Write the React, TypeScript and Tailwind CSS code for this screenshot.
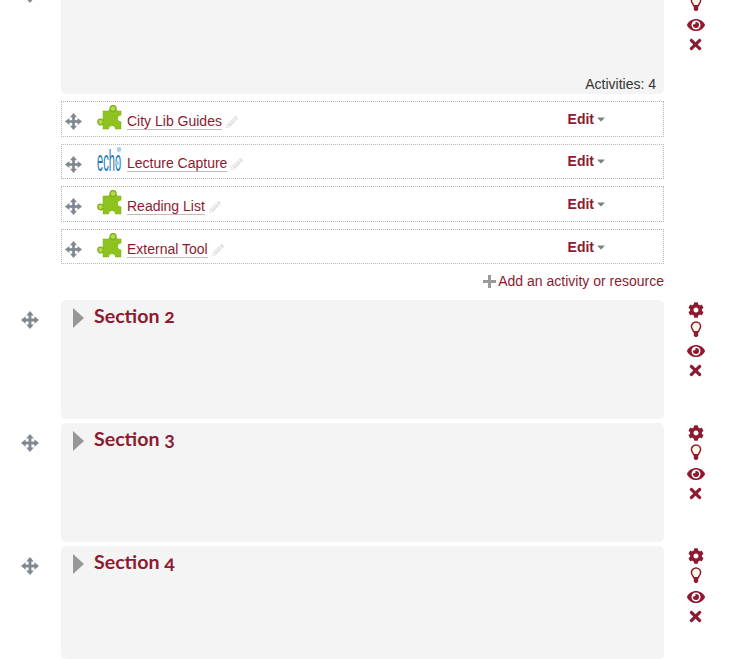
import React from "react";
import { FaCog, FaEye, FaTimes, FaPencilAlt, FaCaretDown } from "react-icons/fa";

const Move = ({ size = 18 }: { size?: number }) => (
  <svg width={size} height={size} viewBox="0 0 18 18" className="shrink-0">
    <g fill="#7f8790">
      <rect x="7.6" y="3" width="2.8" height="12" />
      <rect x="3" y="7.6" width="12" height="2.8" />
      <path d="M9 0 L12.8 4.6 L5.2 4.6 Z" />
      <path d="M9 18 L12.8 13.4 L5.2 13.4 Z" />
      <path d="M0 9 L4.6 5.2 L4.6 12.8 Z" />
      <path d="M18 9 L13.4 5.2 L13.4 12.8 Z" />
    </g>
  </svg>
);

const Bulb = () => (
  <svg width="14" height="17" viewBox="0 0 14 17" className="-mt-[1px]">
    <path d="M7 1a4.6 4.6 0 0 0-4.6 4.6c0 2 1.6 3.1 2.4 5.2h4.4c.8-2.1 2.4-3.2 2.4-5.2A4.6 4.6 0 0 0 7 1Z" fill="#fff9e8" stroke="#8e1a30" strokeWidth="1.5" />
    <path d="M4.8 10.5h4.4v3.7L8 16H6L4.8 14.2Z" fill="#8e1a30" />
  </svg>
);

const Puzzle = () => (
  <svg width="25" height="25" viewBox="0 0 25 25" className="shrink-0">
    <path d="M6 6h6v-1h8v1h4v18H6Z" fill="#8ec31f" stroke="#7aaa14" strokeWidth="0.5" />
    <circle cx="16" cy="3.6" r="3" fill="#b3dc4a" stroke="#7fae18" strokeWidth="1.3" />
    <circle cx="3.6" cy="17" r="2.8" fill="#b3dc4a" stroke="#7fae18" strokeWidth="1.3" />
    <rect x="6" y="16" width="3" height="2" fill="#8ec31f" />
    <circle cx="24" cy="13.5" r="3" fill="#fff" />
    <circle cx="15" cy="24" r="3" fill="#fff" />
  </svg>
);

const Echo = () => (
  <svg width="25" height="27" viewBox="0 0 25 27" className="shrink-0 overflow-visible">
    <text transform="translate(0 25) scale(0.37 1)" fontFamily="'Liberation Sans', sans-serif" fontSize="30" fill="#1f78bd">echo</text>
    <circle cx="22" cy="3.5" r="2.4" fill="#a8cfe6" />
    <circle cx="20.5" cy="17" r="2" fill="#9fd8d8" />
  </svg>
);

const Row = ({ name, icon, h, textMt, iconMt, penMt, editMt }: { name: string; icon: React.ReactNode; h: string; textMt: string; iconMt: string; penMt: string; editMt: string }) => (
  <li className={`flex items-start border border-dotted border-[#b5b5b5] bg-white ${h}`}>
    <div className="ml-[3px] mt-[11px] w-[32px] shrink-0"><Move size={17} /></div>
    <div className="flex items-start">
      <div className={`w-[30px] shrink-0 ${iconMt}`}>{icon}</div>
      <a className={`border-b border-[#bdbdbd] text-[14px] leading-[16px] text-[#8e1a30] ${textMt}`}>{name}</a>
      <FaPencilAlt className={`ml-[4px] text-[#e4e4e4] ${penMt}`} size={12} />
    </div>
    <div className={`ml-auto mr-[56px] flex items-center text-[14px] font-bold leading-[20px] text-[#8e1a30] ${editMt}`}>
      Edit<FaCaretDown className="-mt-[1px] ml-[1px] text-[#808080]" size={12} />
    </div>
  </li>
);

const Controls = () => (
  <div className="flex w-[63px] shrink-0 flex-col items-center text-[#8e1a30]">
    <div className="flex h-[20px] items-center"><FaCog size={16} /></div>
    <div className="flex h-[20px] items-center"><Bulb /></div>
    <div className="flex h-[21px] items-center"><FaEye size={18} /></div>
    <div className="flex h-[19px] items-center"><FaTimes size={17} /></div>
  </div>
);

const Section = ({ title, h, mb }: { title: string; h: string; mb: string }) => (
  <section className={`flex ${mb}`}>
    <div className="flex w-[61px] shrink-0 justify-start pl-[21px] pt-[11px]"><Move /></div>
    <div className={`w-[603px] shrink-0 rounded-[5px] bg-[#f4f4f4] ${h}`}>
      <div className="flex items-start pl-[12px] pt-[5px]">
        <svg width="11" height="20" viewBox="0 0 11 20" className="mt-[3px] shrink-0"><path d="M0 0 L11 10 L0 20 Z" fill="#979797" /></svg>
        <h3 className="ml-[10px] text-[19.6px] font-bold leading-[22px] text-[#8e1a30] [font-family:Lato,sans-serif] [font-variant-numeric:oldstyle-nums]">{title}</h3>
      </div>
    </div>
    <Controls />
  </section>
);

export default function App() {
  return (
    <div className="h-[659px] w-[732px] overflow-hidden bg-white [font-family:'Liberation_Sans',Arial,sans-serif] text-[14px]">
      <section className="-mt-[26px] flex">
        <div className="flex w-[61px] shrink-0 pl-[21px] pt-[11px]"><Move /></div>
        <div className="w-[603px] shrink-0">
          <div className="relative h-[120px] rounded-[5px] bg-[#f4f4f4]">
            <span className="absolute bottom-0 right-[8px] leading-[20px] text-[#333]">Activities: 4</span>
          </div>
          <ul className="mt-[7px] flex flex-col">
            <Row name="City Lib Guides" icon={<Puzzle />} h="h-[36px] mb-[7px]" textMt="mt-[11px]" iconMt="mt-[3px]" penMt="mt-[14px]" editMt="mt-[7px]" />
            <Row name="Lecture Capture" icon={<Echo />} h="h-[35px] mb-[7px]" textMt="mt-[10px]" iconMt="mt-[1px]" penMt="mt-[13px]" editMt="mt-[6px]" />
            <Row name="Reading List" icon={<Puzzle />} h="h-[36px] mb-[7px]" textMt="mt-[11px]" iconMt="mt-[3px]" penMt="mt-[14px]" editMt="mt-[7px]" />
            <Row name="External Tool" icon={<Puzzle />} h="h-[35px]" textMt="mt-[11px]" iconMt="mt-[3px]" penMt="mt-[14px]" editMt="mt-[7px]" />
          </ul>
          <div className="mt-[7px] flex h-[20px] items-center justify-end text-[#8e1a30]">
            <svg width="13" height="13" viewBox="0 0 13 13" className="mr-[2px]"><path d="M5 0h3v5h5v3H8v5H5V8H0V5h5Z" fill="#999" /></svg>
            Add an activity or resource
          </div>
        </div>
        <Controls />
      </section>
      <div className="h-[9px]" />
      <Section title="Section 2" h="h-[119px]" mb="mb-[4px]" />
      <Section title="Section 3" h="h-[119px]" mb="mb-[4px]" />
      <Section title="Section 4" h="h-[113px]" mb="" />
    </div>
  );
}
